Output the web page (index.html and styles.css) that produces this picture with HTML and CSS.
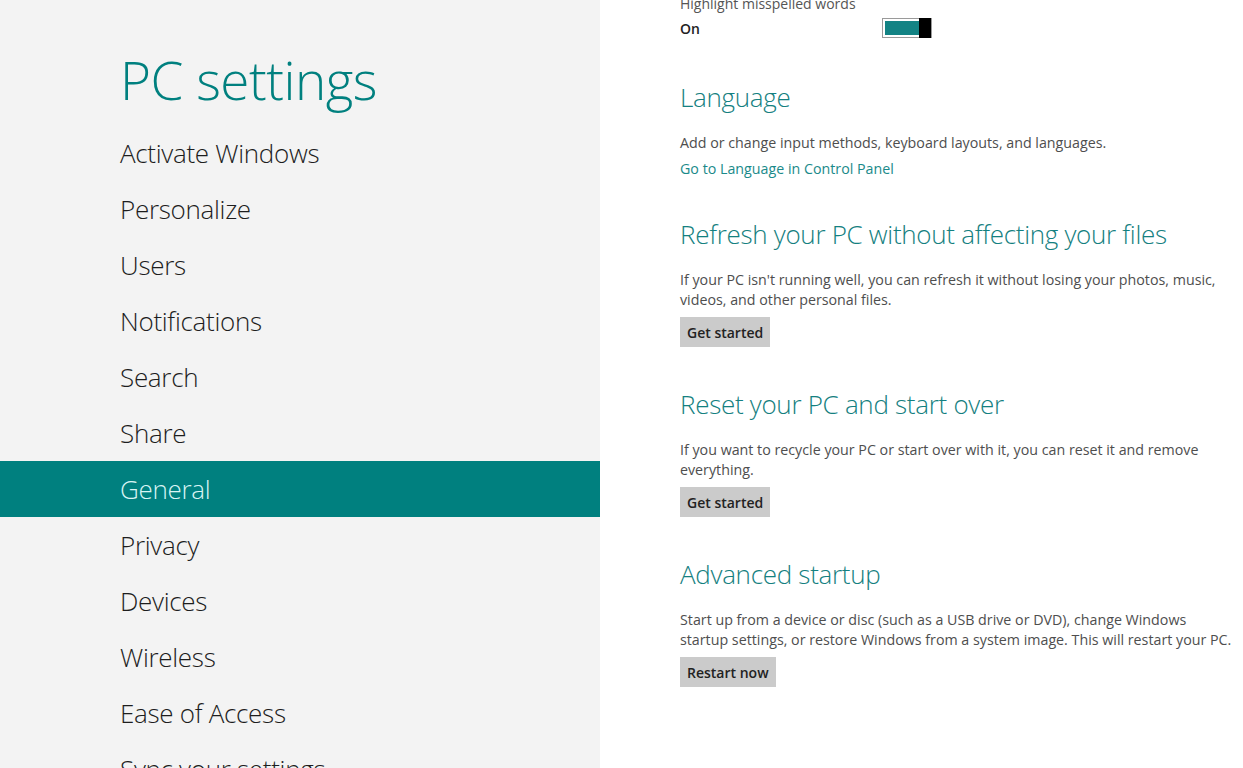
FILE: index.html
```html
<!DOCTYPE html>
<html lang="en">
<head>
<meta charset="utf-8">
<title>PC settings</title>
<link rel="stylesheet" href="styles.css">
</head>
<body>
<div class="app">
  <aside class="nav">
    <h1 class="nav-title">PC settings</h1>
    <ul class="nav-list">
      <li class="nav-item">Activate Windows</li>
      <li class="nav-item">Personalize</li>
      <li class="nav-item">Users</li>
      <li class="nav-item">Notifications</li>
      <li class="nav-item">Search</li>
      <li class="nav-item">Share</li>
      <li class="nav-item active">General</li>
      <li class="nav-item">Privacy</li>
      <li class="nav-item">Devices</li>
      <li class="nav-item">Wireless</li>
      <li class="nav-item">Ease of Access</li>
      <li class="nav-item">Sync your settings</li>
    </ul>
  </aside>
  <main class="content">
    <div class="setting">
      <div class="setting-label">Highlight misspelled words</div>
      <div class="toggle-row">
        <span class="toggle-state">On</span>
        <span class="toggle"><span class="toggle-fill"></span><span class="toggle-thumb"></span></span>
      </div>
    </div>
    <section class="section">
      <h2 class="section-title">Language</h2>
      <p class="section-text">Add or change input methods, keyboard layouts, and languages.</p>
      <a class="section-link">Go to Language in Control Panel</a>
    </section>
    <section class="section section-tight">
      <h2 class="section-title">Refresh your PC without affecting your files</h2>
      <p class="section-text">If your PC isn't running well, you can refresh it without losing your photos, music, videos, and other personal files.</p>
      <button class="btn">Get started</button>
    </section>
    <section class="section">
      <h2 class="section-title">Reset your PC and start over</h2>
      <p class="section-text">If you want to recycle your PC or start over with it, you can reset it and remove everything.</p>
      <button class="btn">Get started</button>
    </section>
    <section class="section">
      <h2 class="section-title">Advanced startup</h2>
      <p class="section-text">Start up from a device or disc (such as a USB drive or DVD), change Windows startup settings, or restore Windows from a system image. This will restart your PC.</p>
      <button class="btn">Restart now</button>
    </section>
  </main>
</div>
</body>
</html>
```

FILE: styles.css
```css
* { box-sizing: border-box; }
html, body { margin: 0; padding: 0; height: 100%; overflow: hidden; }
body {
  font-family: "Open Sans", "Noto Sans", "Liberation Sans", sans-serif;
  background: #ffffff;
}
.app {
  display: flex;
  height: 768px;
}
.nav {
  width: 600px;
  flex: none;
  background: #f3f3f3;
  padding-top: 46px;
}
.nav-title {
  margin: 0 0 12px 120px;
  font-weight: 300;
  font-size: 53px;
  line-height: 67px;
  color: #00807f;
  letter-spacing: -0.5px;
}
.nav-list {
  list-style: none;
  margin: 0;
  padding: 0;
}
.nav-item {
  height: 56px;
  line-height: 56px;
  padding-left: 120px;
  font-size: 26px;
  font-weight: 300;
  color: #1d1d1d;
  letter-spacing: -0.3px;
}
.nav-item.active {
  background: #00807f;
  color: #d8f4f4;
}
.content {
  flex: 1;
  padding-left: 80px;
  color: #4a4a4a;
}
.setting { margin-top: -6px; }
.setting-label {
  font-size: 14px;
  line-height: 20px;
  color: #555;
}
.toggle-row {
  display: flex;
  align-items: center;
  height: 24px;
  margin-top: 2px;
}
.toggle-state {
  width: 202px;
  font-size: 14px;
  font-weight: 600;
  color: #222;
}
.toggle {
  display: flex;
  width: 50px;
  height: 20px;
  border: 1px solid #9a9a9a;
  padding: 2px 0 2px 2px;
  background: #fff;
}
.toggle-fill {
  flex: 1;
  background: #138384;
}
.toggle-thumb {
  width: 12px;
  margin: -3px 0;
  background: #000;
}
.section { margin-top: 39px; }
.section-tight { margin-top: 37px; }
.section-title {
  margin: 0;
  font-size: 26px;
  font-weight: 300;
  line-height: 36px;
  color: #148080;
  letter-spacing: -0.3px;
}
.section-text {
  margin: 18px 0 0 0;
  font-size: 14.25px;
  line-height: 20px;
  color: #4e4e4e;
  max-width: 555px;
}
.section-link {
  display: block;
  margin-top: 6px;
  font-size: 14.25px;
  line-height: 20px;
  color: #1a8a8a;
}
.btn {
  display: block;
  margin-top: 7px;
  height: 30px;
  padding: 0 7px;
  border: none;
  background: #cbcbcb;
  font-family: inherit;
  font-size: 14px;
  font-weight: 600;
  color: #222;
}
```
